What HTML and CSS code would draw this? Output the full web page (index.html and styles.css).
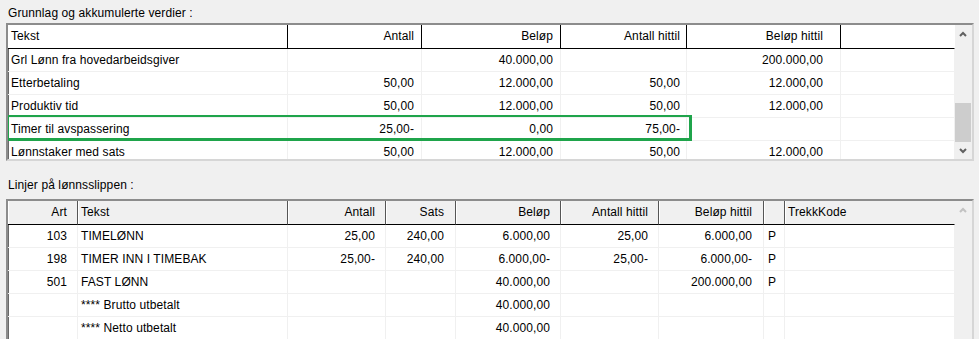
FILE: index.html
```html
<!DOCTYPE html>
<html lang="no">
<head>
<meta charset="utf-8">
<link rel="stylesheet" href="styles.css">
</head>
<body>
<div class="page">
  <div class="caption">Grunnlag og akkumulerte verdier :</div>
  <div class="grid grid-top">
    <div class="cols">
      <div class="row head">
        <div class="c">Tekst</div>
        <div class="c r p7">Antall</div>
        <div class="c r p7">Beløp</div>
        <div class="c r p6">Antall hittil</div>
        <div class="c r p17">Beløp hittil</div>
        <div class="c last"></div>
      </div>
      <div class="row">
        <div class="c">Grl Lønn fra hovedarbeidsgiver</div>
        <div class="c r p7"></div>
        <div class="c r p7">40.000,00</div>
        <div class="c r p6"></div>
        <div class="c r p17">200.000,00</div>
        <div class="c last"></div>
      </div>
      <div class="row">
        <div class="c">Etterbetaling</div>
        <div class="c r p7">50,00</div>
        <div class="c r p7">12.000,00</div>
        <div class="c r p6">50,00</div>
        <div class="c r p17">12.000,00</div>
        <div class="c last"></div>
      </div>
      <div class="row">
        <div class="c">Produktiv tid</div>
        <div class="c r p7">50,00</div>
        <div class="c r p7">12.000,00</div>
        <div class="c r p6">50,00</div>
        <div class="c r p17">12.000,00</div>
        <div class="c last"></div>
      </div>
      <div class="row">
        <div class="c">Timer til avspassering</div>
        <div class="c r p7">25,00-</div>
        <div class="c r p7">0,00</div>
        <div class="c r p6">75,00-</div>
        <div class="c r p17"></div>
        <div class="c last"></div>
      </div>
      <div class="row">
        <div class="c">Lønnstaker med sats</div>
        <div class="c r p7">50,00</div>
        <div class="c r p7">12.000,00</div>
        <div class="c r p6">50,00</div>
        <div class="c r p17">12.000,00</div>
        <div class="c last"></div>
      </div>
    </div>
    <div class="vscroll">
      <div class="sbtn"><svg width="8" height="6" viewBox="0 0 8 6"><polyline points="1,5 4,2 7,5" fill="none" stroke="#606060" stroke-width="2"/></svg></div>
      <div class="track"><div class="thumb"></div></div>
      <div class="sbtn"><svg width="8" height="6" viewBox="0 0 8 6"><polyline points="1,1 4,4 7,1" fill="none" stroke="#606060" stroke-width="2"/></svg></div>
    </div>
    <div class="highlight"></div>
  </div>

  <div class="caption caption-2">Linjer på lønnsslippen :</div>
  <div class="grid grid-bottom">
    <div class="cols">
      <div class="row head">
        <div class="c r p10">Art</div>
        <div class="c">Tekst</div>
        <div class="c r p10">Antall</div>
        <div class="c r p11">Sats</div>
        <div class="c r p10">Beløp</div>
        <div class="c r p10">Antall hittil</div>
        <div class="c r p11">Beløp hittil</div>
        <div class="c pl4"></div>
        <div class="c last">TrekkKode</div>
      </div>
      <div class="row">
        <div class="c r p10">103</div>
        <div class="c">TIMELØNN</div>
        <div class="c r p10">25,00</div>
        <div class="c r p11">240,00</div>
        <div class="c r p10">6.000,00</div>
        <div class="c r p10">25,00</div>
        <div class="c r p11">6.000,00</div>
        <div class="c pl4">P</div>
        <div class="c last"></div>
      </div>
      <div class="row">
        <div class="c r p10">198</div>
        <div class="c">TIMER INN I TIMEBAK</div>
        <div class="c r p10 neg">25,00-</div>
        <div class="c r p11">240,00</div>
        <div class="c r p10 neg">6.000,00-</div>
        <div class="c r p10 neg">25,00-</div>
        <div class="c r p11 neg">6.000,00-</div>
        <div class="c pl4">P</div>
        <div class="c last"></div>
      </div>
      <div class="row">
        <div class="c r p10">501</div>
        <div class="c">FAST LØNN</div>
        <div class="c r p10"></div>
        <div class="c r p11"></div>
        <div class="c r p10">40.000,00</div>
        <div class="c r p10"></div>
        <div class="c r p11">200.000,00</div>
        <div class="c pl4">P</div>
        <div class="c last"></div>
      </div>
      <div class="row">
        <div class="c r p10"></div>
        <div class="c">**** Brutto utbetalt</div>
        <div class="c r p10"></div>
        <div class="c r p11"></div>
        <div class="c r p10">40.000,00</div>
        <div class="c r p10"></div>
        <div class="c r p11"></div>
        <div class="c pl4"></div>
        <div class="c last"></div>
      </div>
      <div class="row">
        <div class="c r p10"></div>
        <div class="c">**** Netto utbetalt</div>
        <div class="c r p10"></div>
        <div class="c r p11"></div>
        <div class="c r p10">40.000,00</div>
        <div class="c r p10"></div>
        <div class="c r p11"></div>
        <div class="c pl4"></div>
        <div class="c last"></div>
      </div>
    </div>
    <div class="vscroll disabled">
      <div class="sbtn"><svg width="8" height="6" viewBox="0 0 8 6"><polyline points="1,5 4,2 7,5" fill="none" stroke="#c2c2c2" stroke-width="2"/></svg></div>
      <div class="track"></div>
    </div>
  </div>
</div>
</body>
</html>
```

FILE: styles.css
```css
html, body {
  margin: 0;
  padding: 0;
  background: #f0f0f0;
  overflow: hidden;
}

body {
  font-family: "Liberation Sans", Arial, sans-serif;
  font-size: 12px;
  letter-spacing: 0.1px;
  color: #000;
}

.page {
  padding: 0 5px 0 6px;
}

.caption {
  box-sizing: border-box;
  height: 23px;
  padding: 4px 0 0 2px;
  line-height: 19px;
}

.caption-2 {
  height: 38px;
  padding-top: 15px;
}

.grid {
  position: relative;
  display: flex;
  border: 2px solid;
  border-color: #8c8c8c #d6d6d6 #d6d6d6 #8c8c8c;
  box-shadow: inset 1px 1px 0 #696969;
  background: #fff;
  overflow: hidden;
}

.grid-top {
  height: 134px;
}

.grid-bottom {
  height: 150px;
}

.cols {
  flex: 1;
  overflow: hidden;
}

.row {
  display: grid;
  height: 23px;
}

.grid-top .row {
  grid-template-columns: 280px 134px 139px 126px 154px 114px;
}

.grid-bottom .row {
  grid-template-columns: 70px 210px 98px 70px 105px 98px 105px 21px 170px;
}

.c {
  box-sizing: border-box;
  border-right: 1px solid #f0f0f0;
  border-bottom: 1px solid #f0f0f0;
  padding: 0 3px;
  line-height: 22px;
  white-space: nowrap;
  overflow: hidden;
}

.c.last {
  border-right-color: #f0f0f0;
}

.r { text-align: right; }
.p6 { padding-right: 6px; }
.p7 { padding-right: 7px; }
.p10 { padding-right: 10px; }
.p11 { padding-right: 11px; }
.p17 { padding-right: 17px; }
.pl4 { padding-left: 4px; }

.row.head {
  height: 24px;
}

.row.head .c {
  line-height: 23px;
  border-bottom: 1px solid #000;
  border-right: 1px solid #000;
}

.row.head .c.last {
  border-right-color: transparent;
}

.grid-top .row.head {
  background: #fff;
}

.grid-bottom .row.head {
  background: #f0f0f0;
}

.grid-bottom .row.head .c {
  border-right-color: #555;
  box-shadow: inset 1px 0 0 #fff;
}

.grid-bottom .row.head .c.last {
  border-right-color: transparent;
}

.vscroll {
  width: 17px;
  flex: none;
  display: flex;
  flex-direction: column;
  background: #f0f0f0;
}

.sbtn {
  height: 17px;
  display: flex;
  align-items: center;
  justify-content: center;
  flex: none;
}

.sbtn svg {
  display: block;
  margin-right: 1px;
}

.track {
  flex: 1;
  display: flex;
  flex-direction: column;
  justify-content: flex-end;
}

.thumb {
  height: 39px;
  margin-right: 1px;
  background: #cdcdcd;
}

.highlight {
  position: absolute;
  left: -2px;
  top: 90px;
  width: 686px;
  height: 26px;
  box-sizing: border-box;
  border: 3px solid #1fa44b;
  border-top-width: 2px;
  pointer-events: none;
}
```
